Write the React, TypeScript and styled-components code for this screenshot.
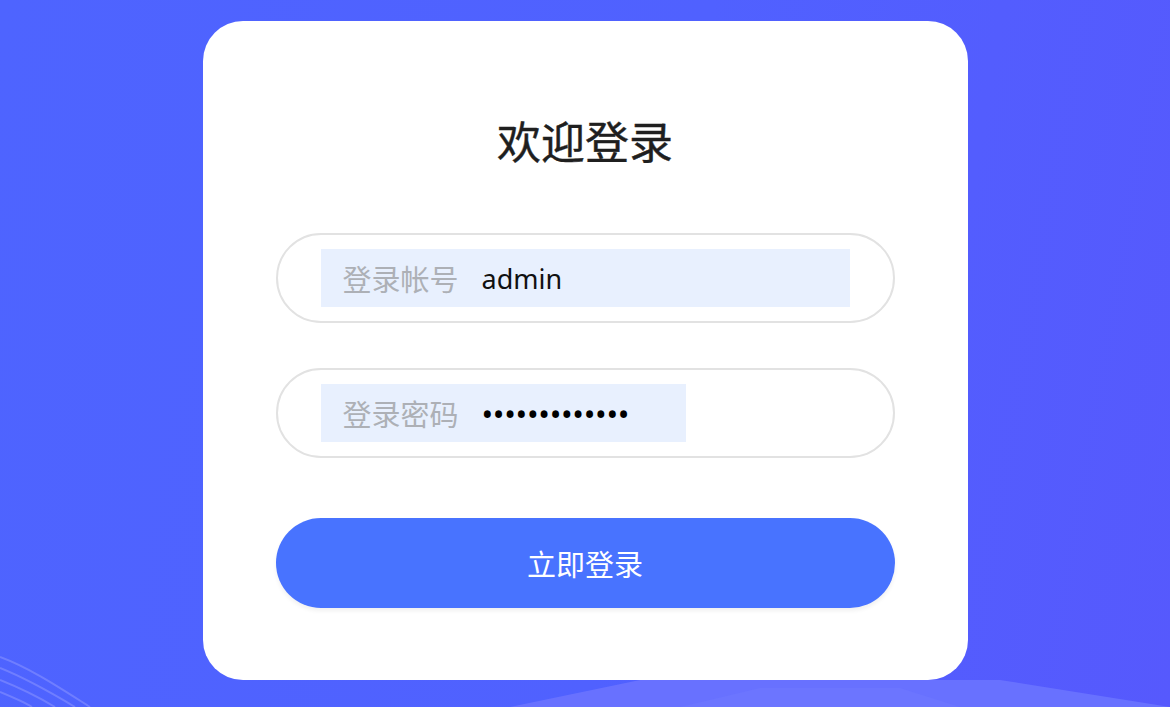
import React from "react";
import styled, { createGlobalStyle } from "styled-components";

const Global = createGlobalStyle`
  html, body { margin: 0; padding: 0; height: 100%; }
  body { font-family: "Noto Sans", "Noto Sans CJK SC", sans-serif; }
  #root { height: 100%; }
`;

const Page = styled.div`
  position: relative;
  width: 100%;
  height: 707px;
  overflow: hidden;
  background: linear-gradient(100deg, #4e64ff 0%, #5061ff 55%, #5659fd 100%);
  display: flex;
  justify-content: center;
  padding-top: 21px;
  box-sizing: border-box;
`;

const Decor = styled.svg`
  position: absolute;
  left: 0;
  top: 0;
  width: 100%;
  height: 100%;
  pointer-events: none;
`;

const Card = styled.div`
  position: relative;
  width: 765px;
  height: 659px;
  background: #ffffff;
  border-radius: 40px;
  box-sizing: border-box;
  padding: 89px 73px 0;
  display: flex;
  flex-direction: column;
  align-items: stretch;
`;

const Title = styled.h1`
  margin: 0 0 63px;
  font-family: "Noto Sans CJK SC", sans-serif;
  font-weight: 400;
  font-size: 44px;
  line-height: 60px;
  color: #1f1f1f;
  text-align: center;
  -webkit-text-stroke: 0.4px #1f1f1f;
`;

const Pill = styled.div<{ $gap?: number }>`
  height: 90px;
  box-sizing: border-box;
  border: 2px solid #e2e2e2;
  border-radius: 45px;
  padding: 0 43px;
  display: flex;
  align-items: center;
  margin-bottom: ${(p) => p.$gap ?? 0}px;
`;

const Filled = styled.div<{ $width: number }>`
  width: ${(p) => p.$width}px;
  height: 58px;
  background: #e8f0fe;
  display: flex;
  align-items: center;
  padding-left: 22px;
  box-sizing: border-box;
  gap: 23px;
`;

const Label = styled.span`
  font-family: "Noto Sans CJK SC", sans-serif;
  font-size: 29px;
  color: #adb0b6;
  line-height: 1;
`;

const Value = styled.span`
  font-family: "Noto Sans", sans-serif;
  font-size: 27px;
  color: #111111;
  line-height: 1;
`;

const Dots = styled.span`
  font-family: "Noto Sans", sans-serif;
  font-size: 31px;
  letter-spacing: -0.3px;
  color: #000000;
  line-height: 1;
  padding-top: 2px;
`;

const Button = styled.button`
  height: 90px;
  border: none;
  border-radius: 45px;
  background: #4873ff;
  color: #ffffff;
  font-family: "Noto Sans CJK SC", sans-serif;
  font-size: 29px;
  cursor: pointer;
  box-shadow: 0 3px 4px rgba(0, 0, 0, 0.06);
`;

export default function App() {
  return (
    <>
      <Global />
      <Page>
        <Decor viewBox="0 0 1170 707" preserveAspectRatio="none">
          <polygon points="510,707 640,680 1000,680 1170,707" fill="#6a73ff" opacity="0.9" />
          <polygon points="680,707 760,688 900,688 960,707" fill="#7079ff" opacity="0.5" />
          <g stroke="#8b95ff" strokeWidth="2" fill="none" opacity="0.55">
            <path d="M0 657 C 30 668, 60 688, 90 707" />
            <path d="M0 668 C 25 678, 50 692, 75 707" />
            <path d="M0 680 C 20 688, 40 698, 55 707" />
            <path d="M0 692 C 12 697, 24 702, 32 707" />
          </g>
        </Decor>
        <Card>
          <Title>欢迎登录</Title>
          <Pill $gap={45}>
            <Filled $width={529}>
              <Label>登录帐号</Label>
              <Value>admin</Value>
            </Filled>
          </Pill>
          <Pill $gap={60}>
            <Filled $width={365}>
              <Label>登录密码</Label>
              <Dots>•••••••••••••</Dots>
            </Filled>
          </Pill>
          <Button>立即登录</Button>
        </Card>
      </Page>
    </>
  );
}
